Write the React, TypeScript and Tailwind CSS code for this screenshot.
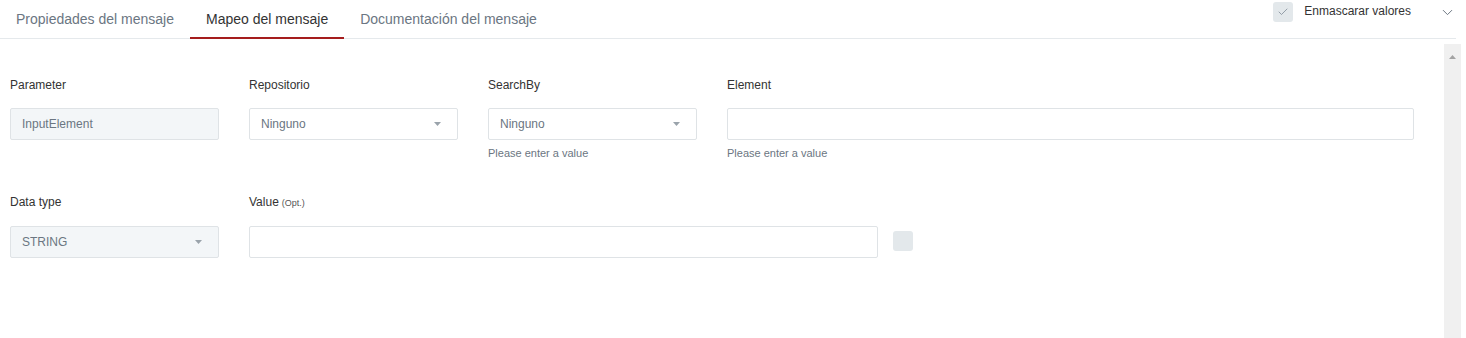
import { ChevronDown, Check } from "lucide-react";

const Caret = () => (
  <svg width="7" height="4" viewBox="0 0 7 4" className="shrink-0">
    <path d="M0 0h7L3.5 4z" fill="#9aa3ab" />
  </svg>
);

const Field = ({
  label,
  opt,
  children,
  help,
  gap = "mt-[16px]",
}: {
  label: string;
  opt?: boolean;
  children: React.ReactNode;
  help?: string;
  gap?: string;
}) => (
  <div className="flex flex-col">
    <div className="h-[14px] text-[12px] leading-[14px] text-[#333]">
      {label}
      {opt && <span className="ml-[3px] text-[9px] text-[#555]">(Opt.)</span>}
    </div>
    <div className={gap}>{children}</div>
    <div className="mt-[6px] h-[14px] text-[11px] leading-[14px] text-[#6b7682]">{help}</div>
  </div>
);

const Box = ({
  text,
  disabled,
  select,
}: {
  text?: string;
  disabled?: boolean;
  select?: boolean;
}) => (
  <div
    className={`flex h-[32px] items-center justify-between rounded-[2px] border border-[#dfe3e6] px-[11px] text-[12px] text-[#6b7682] ${
      disabled ? "bg-[#f3f6f8]" : "bg-white"
    } ${select ? "pr-[16px]" : ""}`}
  >
    <span>{text}</span>
    {select && <Caret />}
  </div>
);

export default function App() {
  return (
    <div
      className="relative h-[338px] w-[1466px] overflow-hidden bg-white"
      style={{ fontFamily: "'Liberation Sans', Arial, sans-serif" }}
    >
      {/* header */}
      <div className="flex h-[39px] w-[1456px] items-stretch justify-between border-b border-[#e5e9ec]">
        <div className="flex text-[14px]">
          <div className="flex items-center px-4 text-[#6b7682]">Propiedades del mensaje</div>
          <div className="relative flex items-center px-4 text-[#333]">
            Mapeo del mensaje
            <div className="absolute right-0 bottom-[-1px] left-0 h-[2px] bg-[#a51d1d]" />
          </div>
          <div className="flex items-center px-4 text-[#6b7682]">Documentación del mensaje</div>
        </div>
        <div className="flex items-start pt-[2px]">
          <div className="flex h-[20px] w-[20px] items-center justify-center rounded-[3px] bg-[#e3e8eb]">
            <Check size={12} strokeWidth={1.5} color="#7a8591" />
          </div>
          <span className="ml-[11px] pt-[2px] text-[12px] leading-[14px] text-[#333]">Enmascarar valores</span>
          <ChevronDown size={17} strokeWidth={1.4} color="#6b7682" className="mt-[2px] ml-[28px]" />
        </div>
      </div>

      {/* scrollbar */}
      <div className="absolute top-[44px] bottom-0 left-[1444px] flex w-[17px] justify-center bg-[#f0f0f0] pt-[11px]">
        <svg width="7" height="4" viewBox="0 0 7 4">
          <path d="M0 4h7L3.5 0z" fill="#a3a3a3" />
        </svg>
      </div>

      {/* content */}
      <div className="pt-[39px] pl-[10px]">
        <div className="grid grid-cols-[209px_209px_209px_687px] gap-x-[30px]">
          <Field label="Parameter">
            <Box text="InputElement" disabled />
          </Field>
          <Field label="Repositorio">
            <Box text="Ninguno" select />
          </Field>
          <Field label="SearchBy" help="Please enter a value">
            <Box text="Ninguno" select />
          </Field>
          <Field label="Element" help="Please enter a value">
            <Box />
          </Field>
        </div>
        <div className="mt-[35px] flex items-start gap-x-[30px]">
          <div className="w-[209px]">
            <Field label="Data type" gap="mt-[17px]">
              <Box text="STRING" disabled select />
            </Field>
          </div>
          <div className="w-[629px]">
            <Field label="Value" opt gap="mt-[17px]">
              <Box />
            </Field>
          </div>
          <div className="-ml-[15px] mt-[36px] h-[20px] w-[20px] rounded-[3px] bg-[#e3e8eb]" />
        </div>
      </div>
    </div>
  );
}
